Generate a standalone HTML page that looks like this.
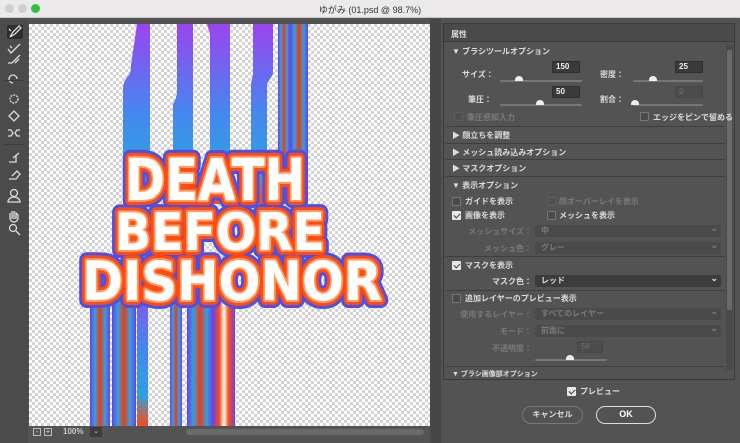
<!DOCTYPE html>
<html><head><meta charset="utf-8"><style>
*{margin:0;padding:0;box-sizing:border-box}
body{width:740px;height:443px;overflow:hidden;background:#535353;font-family:"Liberation Sans","Noto Sans CJK JP",sans-serif;position:relative;color:#ddd}
.a{position:absolute}
.t{font-size:8px;white-space:nowrap;font-weight:bold}
.dim{color:#7a7a7a}
.cb{position:absolute;width:9px;height:9px;border:1px solid #777;background:#4a4a4a;border-radius:1px}
.cb.on{background:#e8e8e8;border-color:#e8e8e8}
.cb.on:after{content:"";position:absolute;left:2px;top:0px;width:3px;height:5px;border:solid #333;border-width:0 1.5px 1.5px 0;transform:rotate(45deg)}
.cb.off{border-color:#5e5e5e;background:#505050}
.sep{position:absolute;left:446px;width:279px;height:1px;background:#3f3f3f}
.inp{position:absolute;height:12px;background:#3a3a3a;border:1px solid #2e2e2e;font-size:8px;font-weight:bold;padding-left:3px;line-height:10px;color:#eee}
.sl{position:absolute;height:2px;background:#777;border-radius:1px}
.th{position:absolute;width:8px;height:5px;background:#eee;border-radius:4px 4px 0 0}
.dd{position:absolute;left:535px;width:186px;height:12px;background:#4a4a4a;border-radius:2px;font-size:8px;font-weight:bold;padding-left:6px;line-height:12px;color:#7a7a7a}
.dd:after{content:"⌄";position:absolute;right:3px;top:-3px;font-size:9px}
.dd.en{background:#3c3c3c;color:#ddd}
.lbl{position:absolute;font-size:8px;font-weight:bold;text-align:right;white-space:nowrap}
</style></head><body>
<div class="a" style="left:0;top:0;width:740px;height:18px;background:#ebe9ea;border-bottom:1px solid #c8c8c8"></div>
<div class="a" style="left:5px;top:4px;width:9px;height:9px;border-radius:50%;background:#d0cfd0"></div>
<div class="a" style="left:18px;top:4px;width:9px;height:9px;border-radius:50%;background:#d0cfd0"></div>
<div class="a" style="left:31px;top:4px;width:9px;height:9px;border-radius:50%;background:#2dc23f"></div>
<div class="a" style="left:0;top:3px;width:740px;text-align:center;font-size:9px;color:#333">ゆがみ (01.psd @ 98.7%)</div>
<div class="a" style="left:0;top:19px;width:28px;height:424px;background:#4b4b4b"></div>
<div class="a" style="left:7px;top:25px;width:16px;height:14px;background:#2e2e2e;border-radius:2px"></div>
<svg class="a" style="left:0;top:19px" width="28" height="230" fill="none" stroke="#ddd" stroke-width="1.3">
<path d="M10 18l3-5 6-6 2 2-6 6-5 3zM9 10l2 2"/>
<path d="M8 30l3 4 9-9M10 27l2 2"/>
<path d="M8 44h4M12 44l8-8M15 44l4-4"/>
<path d="M17 60a4 4 0 1 0-4 4"/>
<circle cx="14" cy="80" r="4" stroke-dasharray="2 1"/>
<path d="M9 97l5-5 5 5-5 5z"/>
<path d="M8 111h3l2 3-2 3H8M20 111h-3l-2 3 2 3h3"/>
<path d="M9 143h7v-6M13 139l6-5"/>
<path d="M9 160h7l4-5-3-3-5 5"/>
<circle cx="14" cy="174" r="3.5"/><path d="M8 183a6 5 0 0 1 12 0z"/>
<path d="M10 200v-6m2 6v-8m2 8v-8m2 8v-6l2 2v3a4 4 0 0 1-8 0"/>
<circle cx="13" cy="209" r="3.5"/><path d="M16 212l4 4"/>
</svg>
<div class="a" style="left:4px;top:80px;width:20px;height:1px;background:#3c3c3c"></div>
<div class="a" style="left:4px;top:144px;width:20px;height:1px;background:#3c3c3c"></div>
<div class="a" style="left:29px;top:24px;width:401px;height:402px;background-color:#fff;background-image:linear-gradient(45deg,#d4d4d4 25%,transparent 25%,transparent 75%,#d4d4d4 75%),linear-gradient(45deg,#d4d4d4 25%,transparent 25%,transparent 75%,#d4d4d4 75%);background-size:6px 6px;background-position:0 0,3px 3px;overflow:hidden">
<svg width="401" height="402" style="position:absolute;left:0;top:0">
<defs>
<linearGradient id="g1" x1="0" y1="0" x2="0" y2="1"><stop offset="0" stop-color="#9a44f0"/><stop offset=".5" stop-color="#4488ee"/><stop offset=".8" stop-color="#30a0e0"/><stop offset="1" stop-color="#ff4a10"/></linearGradient>
<linearGradient id="g2" x1="0" y1="0" x2="1" y2="0"><stop offset="0" stop-color="#6a40e8"/><stop offset=".25" stop-color="#30a0e0"/><stop offset=".5" stop-color="#f03a10"/><stop offset=".75" stop-color="#30a0e0"/><stop offset="1" stop-color="#6a40e8"/></linearGradient>
<linearGradient id="g3" x1="0" y1="0" x2="1" y2="0"><stop offset="0" stop-color="#6a40e8"/><stop offset=".3" stop-color="#ff5010"/><stop offset=".5" stop-color="#fff"/><stop offset=".7" stop-color="#ff5010"/><stop offset="1" stop-color="#6a40e8"/></linearGradient>
</defs>
<path d="M108 0h13v180h-27v-115q0-8 6-14q2-3 2-10z" fill="url(#g1)"/>
<path d="M148 0h16v180h-20v-100q4-6 4-14z" fill="url(#g1)"/>
<path d="M178 0h23v180h-20v-170z" fill="url(#g1)"/>
<path d="M224 0h20v50l-6 10v120h-16v-120l2-10z" fill="url(#g1)"/>
<rect x="249" y="0" width="12" height="180" fill="url(#g2)"/>
<rect x="261" y="0" width="18" height="180" fill="url(#g2)"/>
<path d="M140 180 Q152 90 164 180z" fill="url(#g3)"/>
<rect x="61" y="250" width="20" height="152" fill="url(#g2)"/>
<rect x="83" y="250" width="24" height="152" fill="url(#g2)"/>
<rect x="108" y="250" width="11" height="152" fill="url(#g1)"/>
<rect x="141" y="250" width="12" height="152" fill="url(#g2)"/>
<rect x="158" y="250" width="26" height="152" fill="url(#g2)"/>
<rect x="184" y="250" width="22" height="152" fill="url(#g3)"/>
<g font-family="DejaVu Sans" font-weight="bold" text-anchor="middle" stroke-linejoin="round">
<g stroke="#4a50e8" stroke-width="16" fill="#4a50e8">
<text x="186" y="176" font-size="58" textLength="180" lengthAdjust="spacingAndGlyphs">DEATH</text>
<text x="191" y="226" font-size="52" textLength="210" lengthAdjust="spacingAndGlyphs">BEFORE</text>
<text x="203" y="276" font-size="54" textLength="300" lengthAdjust="spacingAndGlyphs">DISHONOR</text></g>
<g stroke="#ff4a10" stroke-width="10" fill="#fff">
<text x="186" y="176" font-size="58" textLength="180" lengthAdjust="spacingAndGlyphs">DEATH</text>
<text x="191" y="226" font-size="52" textLength="210" lengthAdjust="spacingAndGlyphs">BEFORE</text>
<text x="203" y="276" font-size="54" textLength="300" lengthAdjust="spacingAndGlyphs">DISHONOR</text></g>
<g stroke="#ff9a60" stroke-width="4" fill="#fff">
<text x="186" y="176" font-size="58" textLength="180" lengthAdjust="spacingAndGlyphs">DEATH</text>
<text x="191" y="226" font-size="52" textLength="210" lengthAdjust="spacingAndGlyphs">BEFORE</text>
<text x="203" y="276" font-size="54" textLength="300" lengthAdjust="spacingAndGlyphs">DISHONOR</text></g>
<g fill="#fff">
<text x="186" y="176" font-size="58" textLength="180" lengthAdjust="spacingAndGlyphs">DEATH</text>
<text x="191" y="226" font-size="52" textLength="210" lengthAdjust="spacingAndGlyphs">BEFORE</text>
<text x="203" y="276" font-size="54" textLength="300" lengthAdjust="spacingAndGlyphs">DISHONOR</text></g>
</g></svg></div>
<div class="a" style="left:430px;top:19px;width:11px;height:424px;background:#474747"></div>
<div class="a" style="left:33px;top:428px;width:8px;height:8px;border:1px solid #bbb;font-size:8px;line-height:5px;text-align:center;color:#ccc">-</div>
<div class="a" style="left:44px;top:428px;width:8px;height:8px;border:1px solid #bbb;font-size:8px;line-height:6px;text-align:center;color:#ccc">+</div>
<div class="a t" style="left:63px;top:427px;color:#ccc">100%</div>
<div class="a" style="left:90px;top:427px;width:12px;height:10px;background:#3c3c3c;font-size:7px;text-align:center;color:#ccc">⌄</div>
<div class="a" style="left:186px;top:429px;width:238px;height:6px;background:#6a6a6a;border-radius:3px"></div>
<div class="a" style="left:443px;top:23px;width:292px;height:357px;border:1px solid #3a3a3a;background:#535353"></div>
<div class="a" style="left:444px;top:24px;width:290px;height:18px;background:#4a4a4a;border-bottom:1px solid #3a3a3a"></div>
<div class="a t" style="left:451px;top:29px">属性</div>
<div class="a" style="left:726px;top:45px;width:7px;height:325px;background:#4a4a4a"></div>
<div class="a" style="left:727px;top:50px;width:5px;height:260px;background:#6a6a6a;border-radius:2px"></div>
<div class="a t" style="left:452px;top:46px">▼ ブラシツールオプション</div>
<div class="lbl" style="left:462px;top:69px;width:30px">サイズ：</div>
<div class="inp" style="left:552px;top:61px;width:28px">150</div>
<div class="sl" style="left:500px;top:80px;width:82px"></div><div class="th" style="left:515px;top:76px"></div>
<div class="lbl" style="left:600px;top:69px;width:24px">密度：</div>
<div class="inp" style="left:675px;top:61px;width:28px">25</div>
<div class="sl" style="left:633px;top:80px;width:70px"></div><div class="th" style="left:649px;top:76px"></div>
<div class="lbl" style="left:462px;top:94px;width:30px">筆圧：</div>
<div class="inp" style="left:552px;top:86px;width:28px">50</div>
<div class="sl" style="left:500px;top:104px;width:82px"></div><div class="th" style="left:536px;top:100px"></div>
<div class="lbl" style="left:600px;top:94px;width:24px">割合：</div>
<div class="inp" style="left:675px;top:86px;width:28px;background:#4c4c4c;border-color:#474747;color:#666">0</div>
<div class="sl" style="left:633px;top:104px;width:70px"></div><div class="th" style="left:631px;top:100px"></div>
<div class="cb off" style="left:454px;top:112px"></div><div class="a t dim" style="left:467px;top:112px">筆圧感知入力</div>
<div class="cb" style="left:640px;top:112px"></div><div class="a t" style="left:653px;top:112px">エッジをピンで留める</div>
<div class="sep" style="top:126px"></div>
<div class="a t" style="left:452px;top:130px">▶ 顔立ちを調整</div>
<div class="sep" style="top:143px"></div>
<div class="a t" style="left:452px;top:147px">▶ メッシュ読み込みオプション</div>
<div class="sep" style="top:159px"></div>
<div class="a t" style="left:452px;top:163px">▶ マスクオプション</div>
<div class="sep" style="top:176px"></div>
<div class="a t" style="left:452px;top:180px">▼ 表示オプション</div>
<div class="cb" style="left:452px;top:197px"></div><div class="a t" style="left:465px;top:196px">ガイドを表示</div>
<div class="cb off" style="left:547px;top:197px"></div><div class="a t dim" style="left:559px;top:196px">顔オーバーレイを表示</div>
<div class="cb on" style="left:452px;top:211px"></div><div class="a t" style="left:465px;top:210px">画像を表示</div>
<div class="cb" style="left:547px;top:211px"></div><div class="a t" style="left:559px;top:210px">メッシュを表示</div>
<div class="lbl dim" style="left:440px;top:226px;width:92px">メッシュサイズ：</div><div class="dd" style="top:225px">中</div>
<div class="lbl dim" style="left:440px;top:243px;width:92px">メッシュ色：</div><div class="dd" style="top:242px">グレー</div>
<div class="sep" style="top:256px"></div>
<div class="cb on" style="left:452px;top:261px"></div><div class="a t" style="left:465px;top:260px">マスクを表示</div>
<div class="lbl" style="left:440px;top:276px;width:92px">マスク色：</div><div class="dd en" style="top:275px">レッド</div>
<div class="sep" style="top:290px"></div>
<div class="cb" style="left:452px;top:294px"></div><div class="a t" style="left:465px;top:293px">追加レイヤーのプレビュー表示</div>
<div class="lbl dim" style="left:440px;top:309px;width:92px">使用するレイヤー：</div><div class="dd" style="top:308px">すべてのレイヤー</div>
<div class="lbl dim" style="left:440px;top:326px;width:92px">モード：</div><div class="dd" style="top:325px">前面に</div>
<div class="lbl dim" style="left:440px;top:343px;width:92px">不透明度：</div>
<div class="inp" style="left:577px;top:341px;width:26px;background:#4c4c4c;border-color:#474747;color:#666">50</div>
<div class="sl" style="left:535px;top:359px;width:72px"></div><div class="th" style="left:566px;top:355px"></div>
<div class="sep" style="top:366px"></div>
<div class="a t" style="left:452px;top:369px;font-size:7px;height:8px;overflow:hidden">▼ ブラシ画像部オプション</div>
<div class="cb on" style="left:567px;top:387px"></div><div class="a t" style="left:580px;top:386px">プレビュー</div>
<div class="a" style="left:522px;top:406px;width:61px;height:18px;border:1px solid #777;border-radius:9px;font-size:8px;font-weight:bold;text-align:center;line-height:16px">キャンセル</div>
<div class="a" style="left:596px;top:406px;width:60px;height:18px;border:1.5px solid #ddd;border-radius:9px;font-size:9px;font-weight:bold;text-align:center;line-height:15px;color:#fff">OK</div>
</body></html>
